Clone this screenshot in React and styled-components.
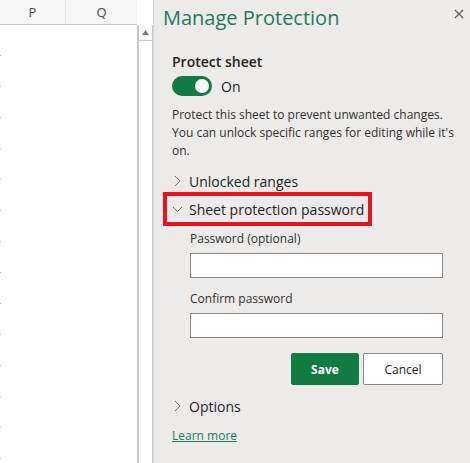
import React, { useState } from 'react';
import styled, { createGlobalStyle } from 'styled-components';

const GlobalStyle = createGlobalStyle`
  html, body {
    margin: 0;
    padding: 0;
    background: #ffffff;
    font-family: "Open Sans", "Noto Sans", sans-serif;
  }
`;

const Screen = styled.div`
  display: flex;
  width: 470px;
  height: 463px;
  overflow: hidden;
`;

const Sheet = styled.div`
  width: 137px;
  display: flex;
  flex-direction: column;
  background: #ffffff;
`;

const ColumnHeader = styled.div`
  display: grid;
  grid-template-columns: 66px 1fr;
  height: 24px;
  background: #f6f6f6;
  border-bottom: 1px solid #c8c8c8;
`;

const ColumnCell = styled.div`
  display: flex;
  align-items: center;
  justify-content: center;
  font-size: 13px;
  color: #4a4a4a;
  border-right: ${(p) => (p.divider ? '1px solid #e6e6e6' : 'none')};
`;

const Grid = styled.div`
  flex: 1;
  display: flex;
  flex-direction: column;
`;

const GridRow = styled.div`
  height: 31px;
  flex-shrink: 0;
  background: linear-gradient(#bdbdbd, #bdbdbd) left bottom / 1px 1px no-repeat;
`;

const Scrollbar = styled.div`
  width: 13px;
  border-left: 2px solid #c8c8c8;
  border-right: 1px solid #c8c8c8;
  background: #ffffff;
  margin-top: 25px;
`;

const ScrollArrow = styled.div`
  height: 15px;
  border-bottom: 1px solid #c8c8c8;
  display: flex;
  align-items: center;
  justify-content: center;
`;

const Panel = styled.div`
  flex: 1;
  background: #edebe9;
  border-left: 1px solid #d6d4d2;
  padding: 4px 0 0 9px;
  color: #252423;
`;

const TitleBar = styled.div`
  display: flex;
  align-items: center;
  justify-content: space-between;
  padding-right: 5px;
`;

const Title = styled.h2`
  margin: 0;
  font-size: 20px;
  font-weight: 400;
  line-height: 28px;
  color: #217a63;
`;

const CloseButton = styled.button`
  background: none;
  border: none;
  padding: 0;
  width: 12px;
  height: 12px;
  cursor: pointer;
  display: flex;
  margin-top: -8px;
`;

const Body = styled.div`
  padding: 20px 27px 0 9px;
`;

const SectionLabel = styled.div`
  font-size: 14px;
  font-weight: 600;
  line-height: 20px;
`;

const ToggleRow = styled.div`
  display: flex;
  align-items: center;
  gap: 9px;
  margin-top: 4px;
  font-size: 14px;
`;

const Toggle = styled.button`
  width: 40px;
  height: 20px;
  border-radius: 10px;
  border: none;
  padding: 3px;
  background: ${(p) => (p.on ? '#107c41' : '#8a8886')};
  display: flex;
  justify-content: ${(p) => (p.on ? 'flex-end' : 'flex-start')};
  cursor: pointer;
`;

const Knob = styled.span`
  width: 14px;
  height: 14px;
  border-radius: 50%;
  background: #ffffff;
`;

const Description = styled.p`
  margin: 10px -12px 0 0;
  font-size: 12px;
  line-height: 18px;
  color: #323130;
`;

const Expander = styled.div`
  display: flex;
  align-items: center;
  gap: 7px;
  height: 26px;
  margin-top: ${(p) => p.top}px;
  margin-left: ${(p) => (p.highlight ? '-5px' : '0')};
  padding-left: ${(p) => (p.highlight ? '5px' : '0')};
  width: ${(p) => (p.highlight ? '196px' : 'auto')};
  font-size: 14px;
  outline: ${(p) => (p.highlight ? '4px solid #e8141b' : 'none')};
  cursor: pointer;
`;

const Fields = styled.div`
  padding-left: 18px;
  display: flex;
  flex-direction: column;
`;

const FieldLabel = styled.label`
  font-size: 12px;
  line-height: 18px;
  margin-top: ${(p) => p.top}px;
  color: #323130;
`;

const TextInput = styled.input`
  box-sizing: border-box;
  height: 25px;
  margin-top: 5px;
  border: 1px solid #8a8886;
  background: #ffffff;
`;

const Actions = styled.div`
  display: flex;
  justify-content: flex-end;
  gap: 4px;
  margin-top: 15px;
`;

const Button = styled.button`
  box-sizing: border-box;
  height: 32px;
  width: ${(p) => p.w}px;
  font-family: inherit;
  font-size: 12px;
  font-weight: ${(p) => (p.primary ? 700 : 400)};
  color: ${(p) => (p.primary ? '#ffffff' : '#252423')};
  background: ${(p) => (p.primary ? '#107c41' : '#ffffff')};
  border: 1px solid ${(p) => (p.primary ? '#107c41' : '#8a8886')};
  border-radius: 2px;
  cursor: pointer;
`;

const LearnMore = styled.a`
  display: inline-block;
  margin-top: 8px;
  font-size: 12px;
  color: #217a63;
  text-decoration: underline;
`;

const Chevron = ({ open }) => (
  <svg width="10" height="12" viewBox="0 0 10 12">
    <path
      d={open ? 'M1 4 L5.5 8.5 L10 4' : 'M3 1 L8 6 L3 11'}
      fill="none"
      stroke="#797775"
      strokeWidth="1"
    />
  </svg>
);

export default function App() {
  const [on, setOn] = useState(true);
  const rows = Array.from({ length: 14 });

  return (
    <Screen>
      <GlobalStyle />
      <Sheet>
        <ColumnHeader>
          <ColumnCell divider>P</ColumnCell>
          <ColumnCell>Q</ColumnCell>
        </ColumnHeader>
        <Grid>
          {rows.map((_, i) => (
            <GridRow key={i} />
          ))}
        </Grid>
      </Sheet>
      <Scrollbar>
        <ScrollArrow>
          <svg width="7" height="5" viewBox="0 0 7 5">
            <path d="M0 5 L3.5 0 L7 5 Z" fill="#7a7a7a" />
          </svg>
        </ScrollArrow>
      </Scrollbar>
      <Panel>
        <TitleBar>
          <Title>Manage Protection</Title>
          <CloseButton aria-label="Close">
            <svg width="12" height="12" viewBox="0 0 12 12">
              <path d="M2 2 L10 10 M10 2 L2 10" stroke="#605e5c" strokeWidth="1.3" />
            </svg>
          </CloseButton>
        </TitleBar>
        <Body>
          <SectionLabel>Protect sheet</SectionLabel>
          <ToggleRow>
            <Toggle on={on} onClick={() => setOn(!on)}>
              <Knob />
            </Toggle>
            {on ? 'On' : 'Off'}
          </ToggleRow>
          <Description>
            Protect this sheet to prevent unwanted changes.
            <br />
            You can unlock specific ranges for editing while it's on.
          </Description>
          <Expander top={8}>
            <Chevron />
            Unlocked ranges
          </Expander>
          <Expander highlight top={2}>
            <Chevron open />
            Sheet protection password
          </Expander>
          <Fields>
            <FieldLabel top={8}>Password (optional)</FieldLabel>
            <TextInput type="password" />
            <FieldLabel top={12}>Confirm password</FieldLabel>
            <TextInput type="password" />
            <Actions>
              <Button primary w={68}>Save</Button>
              <Button w={80}>Cancel</Button>
            </Actions>
          </Fields>
          <Expander top={8}>
            <Chevron />
            Options
          </Expander>
          <LearnMore href="#">Learn more</LearnMore>
        </Body>
      </Panel>
    </Screen>
  );
}
